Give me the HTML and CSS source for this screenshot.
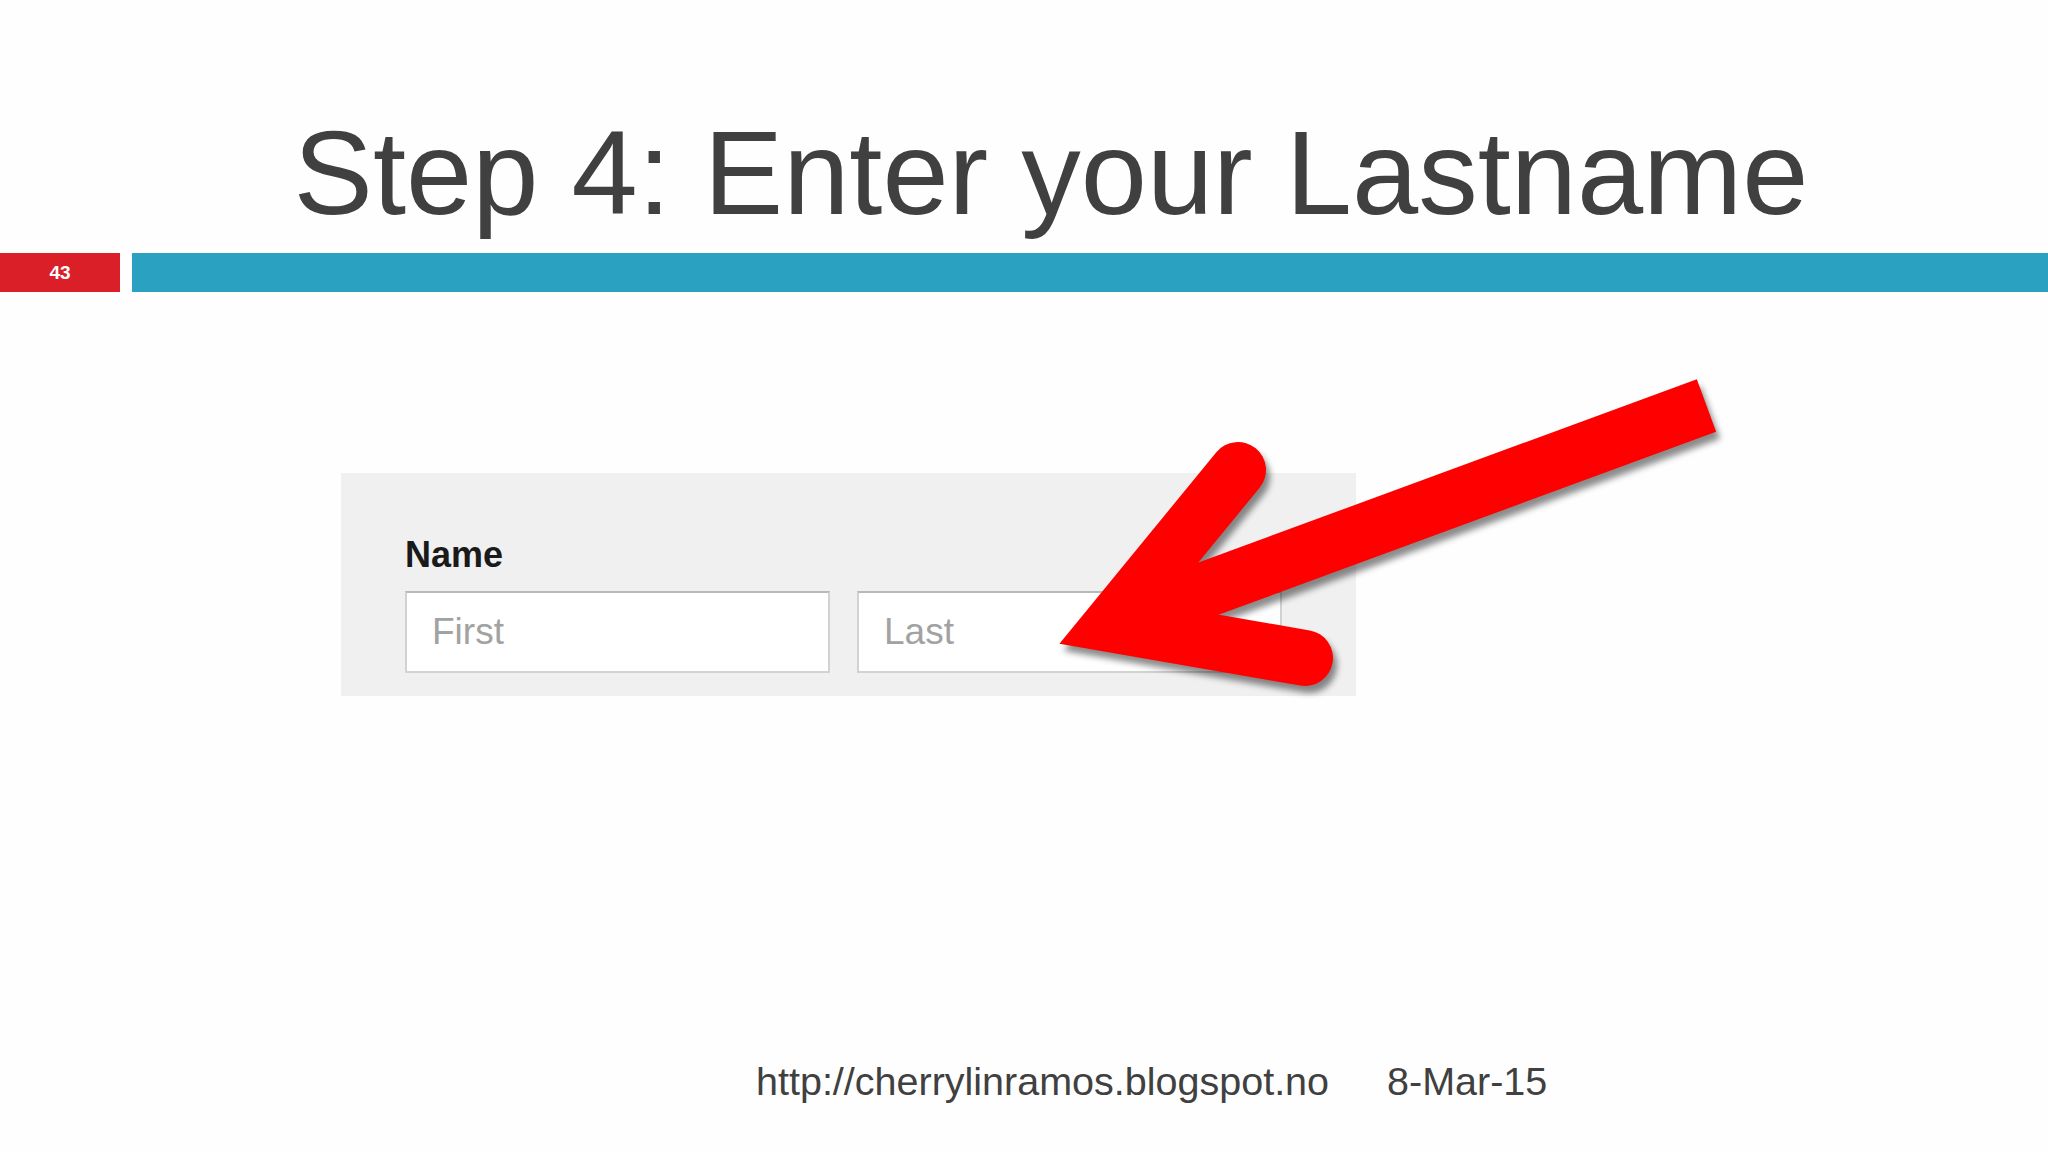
FILE: index.html
```html
<!DOCTYPE html>
<html lang="en">
<head>
<meta charset="utf-8">
<title>Step 4: Enter your Lastname</title>
<link rel="stylesheet" href="styles.css">
</head>
<body>
<div class="slide">
  <h1 class="title">Step 4: Enter your Lastname</h1>
  <div class="bar">
    <div class="slide-num">43</div>
    <div class="bar-line"></div>
  </div>
  <div class="form-panel">
    <div class="field-label">Name</div>
    <div class="field-row">
      <input class="field" type="text" placeholder="First">
      <input class="field" type="text" placeholder="Last">
    </div>
  </div>
  <div class="footer">
    <span class="footer-url">http://cherrylinramos.blogspot.no</span>
    <span class="footer-date">8-Mar-15</span>
  </div>
  <svg class="arrow" viewBox="0 0 2048 1152" width="2048" height="1152" aria-hidden="true">
    <g class="arrow-shape">
      <path d="M1706.5 405.5 L1111.5 624.3" fill="none" stroke="#ff0000" stroke-width="56" stroke-linecap="butt"/>
      <path d="M1238 470 L1111.5 624.3 L1305 658" fill="none" stroke="#ff0000" stroke-width="56" stroke-linecap="round" stroke-linejoin="miter" stroke-miterlimit="6"/>
    </g>
  </svg>
</div>
</body>
</html>
```

FILE: styles.css
```css
* {
  box-sizing: border-box;
}

html, body {
  margin: 0;
  padding: 0;
  background: #ffffff;
}

.slide {
  position: relative;
  width: 2048px;
  height: 1152px;
  overflow: hidden;
  font-family: "Liberation Sans", Arial, sans-serif;
  background: #fefefe;
}

.title {
  margin: 113px 0 0 0;
  padding-left: 54px;
  font-size: 119px;
  line-height: 120px;
  font-weight: normal;
  color: #404040;
  text-align: center;
  white-space: nowrap;
}

.bar {
  display: flex;
  gap: 12px;
  height: 39px;
  margin-top: 20px;
}

.slide-num {
  width: 120px;
  background: #da1f29;
  color: #ffffff;
  font-weight: bold;
  font-size: 19px;
  display: flex;
  align-items: center;
  justify-content: center;
}

.bar-line {
  flex: 1;
  background: #2ba1c1;
}

.form-panel {
  margin: 181px 0 0 341px;
  width: 1015px;
  height: 223px;
  background: #f0f0f1;
  padding: 64px 0 0 64px;
}

.field-label {
  font-size: 36px;
  line-height: 36px;
  font-weight: bold;
  color: #1a1a1a;
}

.field-row {
  display: flex;
  gap: 27px;
  margin-top: 18px;
}

.field {
  width: 425px;
  height: 82px;
  margin: 0;
  padding: 0 0 0 25px;
  border: 2px solid #d2d2d2;
  border-top-color: #b9b9b9;
  background: #ffffff;
  font-family: "Liberation Sans", Arial, sans-serif;
  font-size: 37px;
  color: #333333;
  outline: none;
}

.field::placeholder {
  color: #a2a2a2;
  opacity: 1;
}

.footer {
  display: flex;
  gap: 58px;
  margin-top: 365px;
  padding-left: 756px;
  font-size: 39.5px;
  line-height: 40px;
  color: #404040;
  white-space: nowrap;
}

.arrow {
  position: absolute;
  left: 0;
  top: 0;
  pointer-events: none;
}

.arrow-shape {
  filter: drop-shadow(4px 7px 3px rgba(0, 0, 0, 0.45));
}
```
